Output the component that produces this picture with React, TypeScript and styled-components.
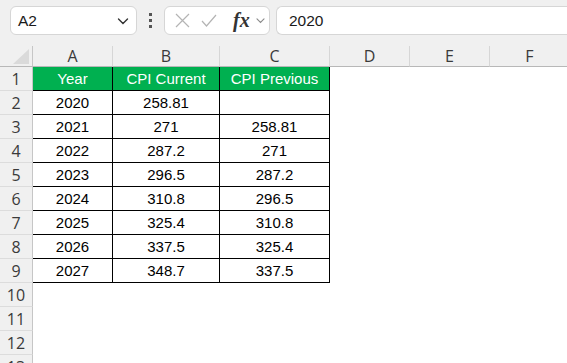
import styled, {createGlobalStyle} from 'styled-components'

const GlobalStyle = createGlobalStyle`
  html, body {
    margin: 0;
    padding: 0;
    background: #ffffff;
    font-family: "Liberation Sans", Arial, sans-serif;
  }
`

const COLUMNS = ['A', 'B', 'C', 'D', 'E', 'F']
const COL_WIDTHS = [80, 107, 110, 80, 80, 80]
const ROW_COUNT = 13

const DATA: string[][] = [
  ['Year', 'CPI Current', 'CPI Previous'],
  ['2020', '258.81', ''],
  ['2021', '271', '258.81'],
  ['2022', '287.2', '271'],
  ['2023', '296.5', '287.2'],
  ['2024', '310.8', '296.5'],
  ['2025', '325.4', '310.8'],
  ['2026', '337.5', '325.4'],
  ['2027', '348.7', '337.5'],
]

export default function App() {
  return (
    <Page>
      <GlobalStyle />
      <Toolbar>
        <NameBox>
          <span>A2</span>
          <Chevron size={14} color="#333" />
        </NameBox>
        <Dots>
          <i />
          <i />
          <i />
        </Dots>
        <IconGroup>
          <svg width="15" height="15" viewBox="0 0 15 15">
            <path d="M1 1 L14 14 M14 1 L1 14" stroke="#b4b4b4" strokeWidth="1.2" fill="none" />
          </svg>
          <svg width="16" height="13" viewBox="0 0 16 13">
            <path d="M1 7 L5.5 12 L15 1" stroke="#b4b4b4" strokeWidth="1.2" fill="none" />
          </svg>
          <Fx>fx</Fx>
          <Chevron size={11} color="#8a8a8a" />
        </IconGroup>
        <FormulaInput>2020</FormulaInput>
      </Toolbar>
      <Sheet>
        <Corner>
          <svg width="16" height="15" viewBox="0 0 16 15">
            <path d="M16 0 L16 15 L0 15 Z" fill="#dadada" />
          </svg>
        </Corner>
        {COLUMNS.map((c) => (
          <ColHeader key={c}>{c}</ColHeader>
        ))}
        {Array.from({length: ROW_COUNT}, (_, r) => (
          <Row key={r} r={r} />
        ))}
      </Sheet>
    </Page>
  )
}

const Row: React.FC<{r: number}> = ({r}) => {
  const rowData = DATA[r]
  return (
    <>
      <RowHeader>{r + 1}</RowHeader>
      {COLUMNS.map((c, ci) => {
        const inTable = !!rowData && ci < 3
        return (
          <Cell key={c} $inTable={inTable} $head={inTable && r === 0}>
            {inTable ? rowData[ci] : ''}
          </Cell>
        )
      })}
    </>
  )
}

const Chevron: React.FC<{size: number; color: string}> = ({size, color}) => (
  <svg width={size} height={size} viewBox="0 0 14 14">
    <path d="M2.5 5 L7 9.5 L11.5 5" stroke={color} strokeWidth="1.4" fill="none" strokeLinecap="round" />
  </svg>
)

const Page = styled.div`
  width: 567px;
  height: 363px;
  overflow: hidden;
  background: #ffffff;
`
const Toolbar = styled.div`
  display: flex;
  align-items: center;
  height: 46px;
  padding: 0 0 5px 10px;
  box-sizing: border-box;
  background: #f0f0f0;
`
const Box = styled.div`
  height: 29px;
  box-sizing: border-box;
  background: #ffffff;
  border: 1px solid #d6d6d6;
  border-radius: 6px;
  display: flex;
  align-items: center;
`
const NameBox = styled(Box)`
  width: 127px;
  padding: 0 6px 0 7px;
  justify-content: space-between;
  font-size: 15.5px;
  color: #1a1a1a;
`
const Dots = styled.div`
  width: 27px;
  display: flex;
  flex-direction: column;
  align-items: center;
  gap: 3px;

  i {
    width: 3px;
    height: 3px;
    background: #555;
  }
`
const IconGroup = styled(Box)`
  width: 106px;
  padding: 0 2px 0 10px;

  svg:nth-child(1) {
    margin-right: 11px;
  }
  svg:nth-child(2) {
    margin-right: 16px;
  }
`
const Fx = styled.span`
  font-family: "Liberation Serif", "DejaVu Serif", serif;
  font-style: italic;
  font-weight: bold;
  font-size: 20px;
  color: #333;
  margin-right: 5px;
`
const FormulaInput = styled(Box)`
  flex: 1;
  margin-left: 6px;
  padding-left: 12px;
  border-right: none;
  border-top-right-radius: 0;
  border-bottom-right-radius: 0;
  font-size: 15.5px;
  color: #1a1a1a;
`
const Sheet = styled.div`
  display: grid;
  grid-template-columns: 33px ${COL_WIDTHS.map((w) => w + 'px').join(' ')};
  grid-template-rows: 21px repeat(${ROW_COUNT}, 24px);
  font-size: 15px;
`
const HeaderBase = styled.div`
  background: #f0f0f0;
  box-sizing: border-box;
  display: flex;
  align-items: center;
  justify-content: center;
  color: #3a3a3a;
  font-family: "Open Sans", "Liberation Sans", sans-serif;
  font-size: 16px;
`
const Corner = styled(HeaderBase)`
  border-right: 1px solid #c6c6c6;
  border-bottom: 1px solid #b8b8b8;
  align-items: flex-end;
  justify-content: flex-end;
  padding: 0 3px 2px 0;
`
const ColHeader = styled(HeaderBase)`
  border-right: 1px solid #d6d6d6;
  border-bottom: 1px solid #b8b8b8;
`
const RowHeader = styled(HeaderBase)`
  border-right: 1px solid #c6c6c6;
  border-bottom: 1px solid #dcdcdc;
`
const Cell = styled.div<{$inTable: boolean; $head: boolean}>`
  box-sizing: border-box;
  display: flex;
  align-items: center;
  justify-content: center;
  border-right: 1px solid ${(p) => (p.$inTable ? '#000' : 'transparent')};
  border-bottom: 1px solid ${(p) => (p.$inTable ? '#000' : 'transparent')};
  background: ${(p) => (p.$head ? '#00b050' : '#ffffff')};
  color: ${(p) => (p.$head ? '#ffffff' : '#000000')};
  white-space: nowrap;
`
